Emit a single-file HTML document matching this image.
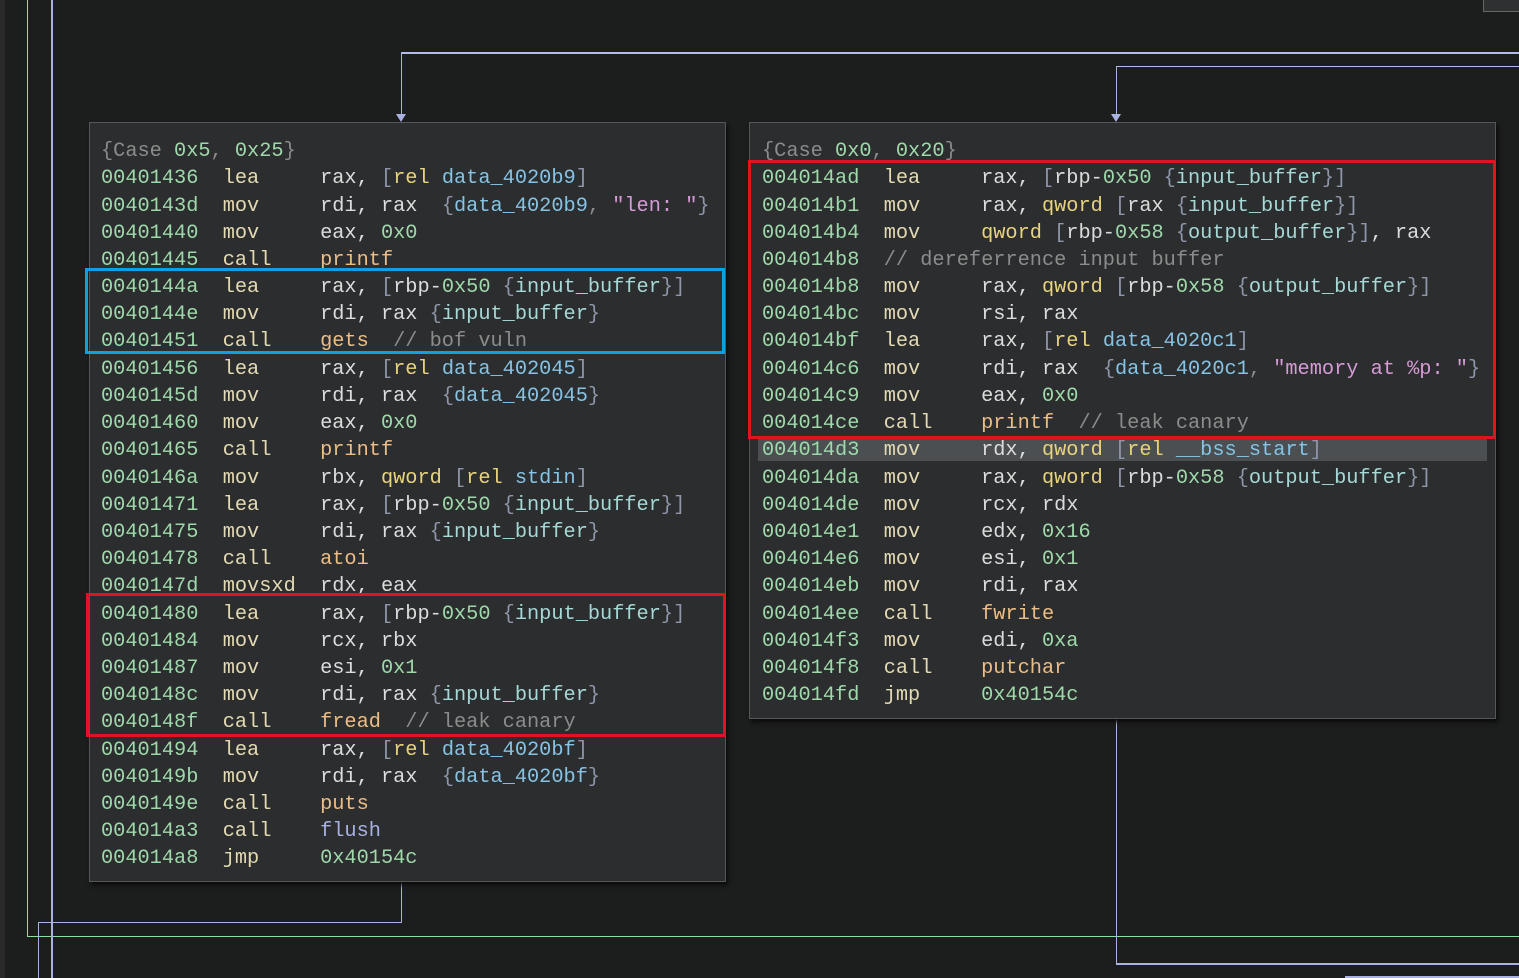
<!DOCTYPE html>
<html><head><meta charset="utf-8"><style>
body{margin:0;width:1519px;height:978px;background:#1c1d1d;position:relative;overflow:hidden;font-family:"Liberation Mono",monospace;}
.abs{position:absolute}
.box{position:absolute;background:#2b2d2e;border:1px solid #555859;box-shadow:2px 3px 4px #0b0b0b}
.ln{position:absolute;white-space:pre;font-size:20.3px;line-height:27px;height:27px;color:#dcdcdc;margin-top:3px}
.a{color:#9fd9ab}.m{color:#e3dab4}.k{color:#e8d37f}.f{color:#ecbd86}.d{color:#86c3e4}.v{color:#a6d8d6}.n{color:#9fd9ab}.c{color:#8c8c8c}.b{color:#8f96aa}.s{color:#d69bd6}.p{color:#a8b1e4}
.hl{position:absolute;background:#4b4f51}
.rect{position:absolute;border:3px solid #e0141e;box-sizing:border-box}
</style></head><body>
<div class="abs" style="left:0;top:0;width:5px;height:978px;background:#2a2a2a"></div>
<div class="abs" style="left:27px;top:0;width:1px;height:937px;background:#8fe0a0"></div>
<div class="abs" style="left:27px;top:936px;width:1492px;height:1px;background:#8fe0a0"></div>
<div class="abs" style="left:51px;top:0;width:2px;height:978px;background:#a9b2e0"></div>
<div class="abs" style="left:38px;top:922px;width:1px;height:56px;background:#a9b2e0"></div>
<div class="abs" style="left:38px;top:922px;width:364px;height:1px;background:#a9b2e0"></div>
<div class="abs" style="left:401px;top:881px;width:1px;height:42px;background:#a9b2e0"></div>
<div class="abs" style="left:401px;top:52px;width:1118px;height:2px;background:#b5bce8"></div>
<div class="abs" style="left:401px;top:52px;width:1px;height:64px;background:#a9b2e0"></div>
<div class="abs" style="left:396px;top:114px;width:0;height:0;border-left:5px solid transparent;border-right:5px solid transparent;border-top:8px solid #a9b2e0"></div>
<div class="abs" style="left:1116px;top:66px;width:403px;height:1px;background:#b5bce8"></div>
<div class="abs" style="left:1116px;top:66px;width:1px;height:50px;background:#a9b2e0"></div>
<div class="abs" style="left:1111px;top:114px;width:0;height:0;border-left:5px solid transparent;border-right:5px solid transparent;border-top:8px solid #a9b2e0"></div>
<div class="abs" style="left:1116px;top:718px;width:1px;height:246px;background:#a9b2e0"></div>
<div class="abs" style="left:1116px;top:963px;width:403px;height:2px;background:#a9b2e0"></div>
<div class="abs" style="left:1345px;top:976px;width:174px;height:2px;background:#a9b2e0"></div>
<div class="abs" style="left:1483px;top:-2px;width:40px;height:12px;background:#2e3031;border:1px solid #666"></div>

<div class="box" style="left:89px;top:122px;width:635px;height:758px"></div>
<div class="box" style="left:749px;top:122px;width:745px;height:595px"></div>
<div class="hl" style="left:758px;top:437px;width:729px;height:24px"></div>

<div class="ln" style="left:101px;top:135px"><span class="c">{Case </span><span class="n">0x5</span><span class="c">, </span><span class="n">0x25</span><span class="c">}</span></div>
<div class="ln" style="left:101px;top:162px"><span class="a">00401436</span>  <span class="m">lea     </span>rax, <span class="b">[</span><span class="k">rel</span> <span class="d">data_4020b9</span><span class="b">]</span></div>
<div class="ln" style="left:101px;top:190px"><span class="a">0040143d</span>  <span class="m">mov     </span>rdi, rax  <span class="b">{</span><span class="d">data_4020b9</span><span class="c">, </span><span class="s">"len: "</span><span class="b">}</span></div>
<div class="ln" style="left:101px;top:217px"><span class="a">00401440</span>  <span class="m">mov     </span>eax, <span class="n">0x0</span></div>
<div class="ln" style="left:101px;top:244px"><span class="a">00401445</span>  <span class="m">call    </span><span class="f">printf</span></div>
<div class="ln" style="left:101px;top:271px"><span class="a">0040144a</span>  <span class="m">lea     </span>rax, <span class="b">[</span>rbp-<span class="n">0x50</span> <span class="b">{</span><span class="v">input_buffer</span><span class="b">}]</span></div>
<div class="ln" style="left:101px;top:298px"><span class="a">0040144e</span>  <span class="m">mov     </span>rdi, rax <span class="b">{</span><span class="v">input_buffer</span><span class="b">}</span></div>
<div class="ln" style="left:101px;top:325px"><span class="a">00401451</span>  <span class="m">call    </span><span class="f">gets</span>  <span class="c">// bof vuln</span></div>
<div class="ln" style="left:101px;top:353px"><span class="a">00401456</span>  <span class="m">lea     </span>rax, <span class="b">[</span><span class="k">rel</span> <span class="d">data_402045</span><span class="b">]</span></div>
<div class="ln" style="left:101px;top:380px"><span class="a">0040145d</span>  <span class="m">mov     </span>rdi, rax  <span class="b">{</span><span class="d">data_402045</span><span class="b">}</span></div>
<div class="ln" style="left:101px;top:407px"><span class="a">00401460</span>  <span class="m">mov     </span>eax, <span class="n">0x0</span></div>
<div class="ln" style="left:101px;top:434px"><span class="a">00401465</span>  <span class="m">call    </span><span class="f">printf</span></div>
<div class="ln" style="left:101px;top:462px"><span class="a">0040146a</span>  <span class="m">mov     </span>rbx, <span class="k">qword</span> <span class="b">[</span><span class="k">rel</span> <span class="d">stdin</span><span class="b">]</span></div>
<div class="ln" style="left:101px;top:489px"><span class="a">00401471</span>  <span class="m">lea     </span>rax, <span class="b">[</span>rbp-<span class="n">0x50</span> <span class="b">{</span><span class="v">input_buffer</span><span class="b">}]</span></div>
<div class="ln" style="left:101px;top:516px"><span class="a">00401475</span>  <span class="m">mov     </span>rdi, rax <span class="b">{</span><span class="v">input_buffer</span><span class="b">}</span></div>
<div class="ln" style="left:101px;top:543px"><span class="a">00401478</span>  <span class="m">call    </span><span class="f">atoi</span></div>
<div class="ln" style="left:101px;top:570px"><span class="a">0040147d</span>  <span class="m">movsxd  </span>rdx, eax</div>
<div class="ln" style="left:101px;top:598px"><span class="a">00401480</span>  <span class="m">lea     </span>rax, <span class="b">[</span>rbp-<span class="n">0x50</span> <span class="b">{</span><span class="v">input_buffer</span><span class="b">}]</span></div>
<div class="ln" style="left:101px;top:625px"><span class="a">00401484</span>  <span class="m">mov     </span>rcx, rbx</div>
<div class="ln" style="left:101px;top:652px"><span class="a">00401487</span>  <span class="m">mov     </span>esi, <span class="n">0x1</span></div>
<div class="ln" style="left:101px;top:679px"><span class="a">0040148c</span>  <span class="m">mov     </span>rdi, rax <span class="b">{</span><span class="v">input_buffer</span><span class="b">}</span></div>
<div class="ln" style="left:101px;top:706px"><span class="a">0040148f</span>  <span class="m">call    </span><span class="f">fread</span>  <span class="c">// leak canary</span></div>
<div class="ln" style="left:101px;top:734px"><span class="a">00401494</span>  <span class="m">lea     </span>rax, <span class="b">[</span><span class="k">rel</span> <span class="d">data_4020bf</span><span class="b">]</span></div>
<div class="ln" style="left:101px;top:761px"><span class="a">0040149b</span>  <span class="m">mov     </span>rdi, rax  <span class="b">{</span><span class="d">data_4020bf</span><span class="b">}</span></div>
<div class="ln" style="left:101px;top:788px"><span class="a">0040149e</span>  <span class="m">call    </span><span class="f">puts</span></div>
<div class="ln" style="left:101px;top:815px"><span class="a">004014a3</span>  <span class="m">call    </span><span class="p">flush</span></div>
<div class="ln" style="left:101px;top:842px"><span class="a">004014a8</span>  <span class="m">jmp     </span><span class="n">0x40154c</span></div>

<div class="ln" style="left:762px;top:135px"><span class="c">{Case </span><span class="n">0x0</span><span class="c">, </span><span class="n">0x20</span><span class="c">}</span></div>
<div class="ln" style="left:762px;top:162px"><span class="a">004014ad</span>  <span class="m">lea     </span>rax, <span class="b">[</span>rbp-<span class="n">0x50</span> <span class="b">{</span><span class="v">input_buffer</span><span class="b">}]</span></div>
<div class="ln" style="left:762px;top:190px"><span class="a">004014b1</span>  <span class="m">mov     </span>rax, <span class="k">qword</span> <span class="b">[</span>rax <span class="b">{</span><span class="v">input_buffer</span><span class="b">}]</span></div>
<div class="ln" style="left:762px;top:217px"><span class="a">004014b4</span>  <span class="m">mov     </span><span class="k">qword</span> <span class="b">[</span>rbp-<span class="n">0x58</span> <span class="b">{</span><span class="v">output_buffer</span><span class="b">}]</span>, rax</div>
<div class="ln" style="left:762px;top:244px"><span class="a">004014b8</span>  <span class="c">// dereferrence input buffer</span></div>
<div class="ln" style="left:762px;top:271px"><span class="a">004014b8</span>  <span class="m">mov     </span>rax, <span class="k">qword</span> <span class="b">[</span>rbp-<span class="n">0x58</span> <span class="b">{</span><span class="v">output_buffer</span><span class="b">}]</span></div>
<div class="ln" style="left:762px;top:298px"><span class="a">004014bc</span>  <span class="m">mov     </span>rsi, rax</div>
<div class="ln" style="left:762px;top:325px"><span class="a">004014bf</span>  <span class="m">lea     </span>rax, <span class="b">[</span><span class="k">rel</span> <span class="d">data_4020c1</span><span class="b">]</span></div>
<div class="ln" style="left:762px;top:353px"><span class="a">004014c6</span>  <span class="m">mov     </span>rdi, rax  <span class="b">{</span><span class="d">data_4020c1</span><span class="c">, </span><span class="s">"memory at %p: "</span><span class="b">}</span></div>
<div class="ln" style="left:762px;top:380px"><span class="a">004014c9</span>  <span class="m">mov     </span>eax, <span class="n">0x0</span></div>
<div class="ln" style="left:762px;top:407px"><span class="a">004014ce</span>  <span class="m">call    </span><span class="f">printf</span>  <span class="c">// leak canary</span></div>
<div class="ln" style="left:762px;top:434px"><span class="a">004014d3</span>  <span class="m">mov     </span>rdx, <span class="k">qword</span> <span class="b">[</span><span class="k">rel</span> <span class="d">__bss_start</span><span class="b">]</span></div>
<div class="ln" style="left:762px;top:462px"><span class="a">004014da</span>  <span class="m">mov     </span>rax, <span class="k">qword</span> <span class="b">[</span>rbp-<span class="n">0x58</span> <span class="b">{</span><span class="v">output_buffer</span><span class="b">}]</span></div>
<div class="ln" style="left:762px;top:489px"><span class="a">004014de</span>  <span class="m">mov     </span>rcx, rdx</div>
<div class="ln" style="left:762px;top:516px"><span class="a">004014e1</span>  <span class="m">mov     </span>edx, <span class="n">0x16</span></div>
<div class="ln" style="left:762px;top:543px"><span class="a">004014e6</span>  <span class="m">mov     </span>esi, <span class="n">0x1</span></div>
<div class="ln" style="left:762px;top:570px"><span class="a">004014eb</span>  <span class="m">mov     </span>rdi, rax</div>
<div class="ln" style="left:762px;top:598px"><span class="a">004014ee</span>  <span class="m">call    </span><span class="f">fwrite</span></div>
<div class="ln" style="left:762px;top:625px"><span class="a">004014f3</span>  <span class="m">mov     </span>edi, <span class="n">0xa</span></div>
<div class="ln" style="left:762px;top:652px"><span class="a">004014f8</span>  <span class="m">call    </span><span class="f">putchar</span></div>
<div class="ln" style="left:762px;top:679px"><span class="a">004014fd</span>  <span class="m">jmp     </span><span class="n">0x40154c</span></div>

<div class="rect" style="left:85px;top:268px;width:640px;height:86px;border-color:#0ea0e2"></div>
<div class="rect" style="left:86px;top:593px;width:640px;height:144px"></div>
<div class="rect" style="left:748px;top:160px;width:748px;height:279px"></div>
</body></html>
